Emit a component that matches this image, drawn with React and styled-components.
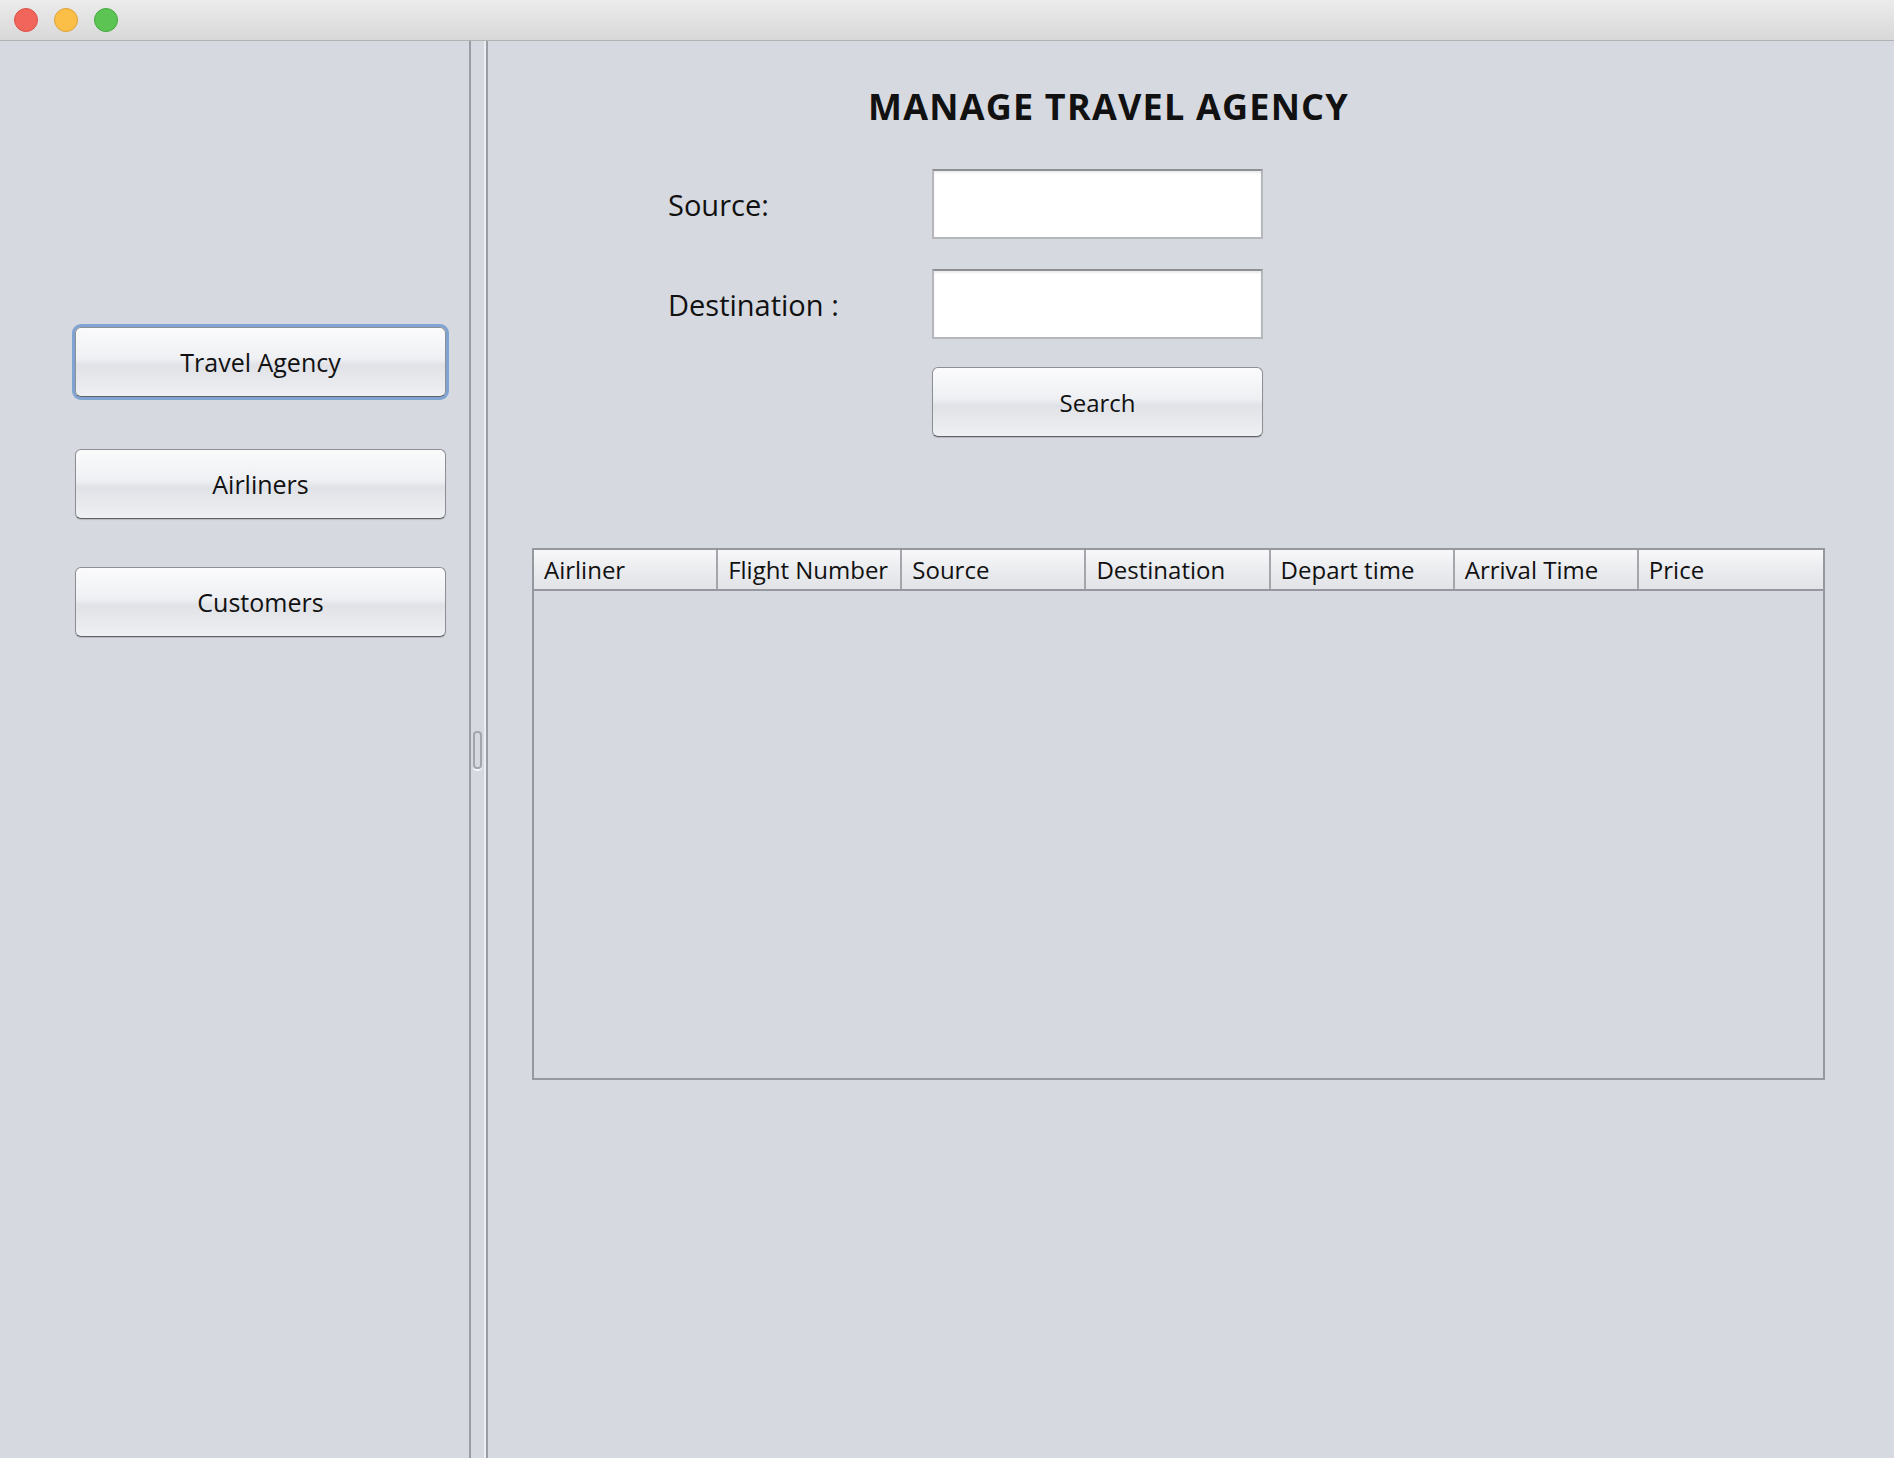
import React from 'react'
import styled, { createGlobalStyle } from 'styled-components'

const GlobalStyle = createGlobalStyle`
  html, body {
    margin: 0;
    padding: 0;
    background: #d6d9e0;
  }
  body {
    font-family: "Open Sans", "DejaVu Sans", sans-serif;
    color: #111;
  }
`

const columns = ['Airliner', 'Flight Number', 'Source', 'Destination', 'Depart time', 'Arrival Time', 'Price']

const App = () => {
  return (
    <Window>
      <GlobalStyle />
      <TitleBar>
        <Light color="#f2655a" edge="#d9524a" />
        <Light color="#fbbe47" edge="#dca23a" />
        <Light color="#5bc452" edge="#45a83f" />
      </TitleBar>
      <Body>
        <SidePanel>
          <NavButton focused top={0}>Travel Agency</NavButton>
          <NavButton top={52}>Airliners</NavButton>
          <NavButton top={48}>Customers</NavButton>
        </SidePanel>
        <Splitter>
          <Grip />
        </Splitter>
        <Main>
          <Title>MANAGE TRAVEL AGENCY</Title>
          <Form>
            <Label>Source:</Label>
            <Field />
            <Label>Destination :</Label>
            <Field />
            <span />
            <SearchButton>Search</SearchButton>
          </Form>
          <Table>
            <HeaderRow>
              {columns.map((c) => (
                <HeaderCell key={c}>{c}</HeaderCell>
              ))}
            </HeaderRow>
            <TableBody />
          </Table>
        </Main>
      </Body>
    </Window>
  )
}

export default App

const Window = styled.div`
  width: 1894px;
  height: 1458px;
  display: flex;
  flex-direction: column;
  background: #d6d9e0;
  overflow: hidden;
`
const TitleBar = styled.div`
  height: 40px;
  flex-shrink: 0;
  display: flex;
  align-items: center;
  gap: 16px;
  padding-left: 14px;
  background: linear-gradient(#ececec, #d8d8d8);
  border-bottom: 1px solid #b2b2b2;
`
const Light = styled.div`
  width: 22px;
  height: 22px;
  border-radius: 50%;
  background: ${(p) => p.color};
  border: 1px solid ${(p) => p.edge};
`
const Body = styled.div`
  flex: 1;
  display: flex;
`
const SidePanel = styled.div`
  width: 469px;
  flex-shrink: 0;
  display: flex;
  flex-direction: column;
  align-items: flex-start;
  padding: 286px 0 0 75px;
  box-sizing: border-box;
`
const NavButton = styled.div`
  width: 371px;
  height: 70px;
  margin-top: ${(p) => p.top || 0}px;
  box-sizing: border-box;
  display: flex;
  align-items: center;
  justify-content: center;
  font-size: 25px;
  border-radius: 6px;
  border: 1px solid #8d8f95;
  border-bottom-color: #5f6166;
  background: linear-gradient(#fbfbfc 0%, #eef0f3 45%, #e0e2e7 55%, #eef0f3 100%);
  box-shadow: ${(p) => (p.focused ? '0 0 0 3px #7fa4d3' : '0 1px 1px rgba(0,0,0,0.15)')};
`
const Splitter = styled.div`
  width: 19px;
  flex-shrink: 0;
  box-sizing: border-box;
  border-left: 2px solid #9a9da5;
  border-right: 2px solid #9a9da5;
  box-shadow: inset -2px 0 0 #eceef2;
  display: flex;
  align-items: center;
  justify-content: center;
`
const Grip = styled.div`
  width: 5px;
  height: 34px;
  border: 2px solid #a3a6ad;
  border-radius: 4px;
  box-shadow: 0 2px 0 #f4f5f8;
  margin-right: 2px;
`
const Main = styled.div`
  flex: 1;
  display: flex;
  flex-direction: column;
  padding: 45px 0 0 44px;
`
const Title = styled.div`
  font-size: 36px;
  font-weight: 700;
  line-height: 42px;
  padding-left: 336px;
  letter-spacing: 1.2px;
`
const Form = styled.div`
  display: grid;
  grid-template-columns: 264px 331px;
  grid-template-rows: 70px 70px 70px;
  row-gap: 30px;
  margin: 41px 0 0 136px;
`
const Label = styled.div`
  font-size: 29px;
  display: flex;
  align-items: center;
`
const Field = styled.div`
  background: #fff;
  border: 2px solid #b6b7ba;
  border-top-color: #8e8f93;
  box-shadow: inset 0 2px 2px rgba(0,0,0,0.08);
`
const SearchButton = styled(NavButton)`
  width: 331px;
  height: 70px;
  font-size: 24px;
  margin-top: -2px;
`
const Table = styled.div`
  width: 1293px;
  height: 532px;
  margin-top: 109px;
  box-sizing: border-box;
  border: 2px solid #96989f;
  display: flex;
  flex-direction: column;
`
const HeaderRow = styled.div`
  display: grid;
  grid-template-columns: repeat(7, 1fr);
  height: 41px;
  box-sizing: border-box;
  border-bottom: 2px solid #96989f;
  background: linear-gradient(#f8f8fa 0%, #ebecef 50%, #e1e3e7 100%);
`
const HeaderCell = styled.div`
  font-size: 24px;
  padding-left: 10px;
  display: flex;
  align-items: center;
  border-right: 2px solid #a4a6ac;
  &:last-child {
    border-right: none;
  }
`
const TableBody = styled.div`
  flex: 1;
  background: #d6d9e0;
`
